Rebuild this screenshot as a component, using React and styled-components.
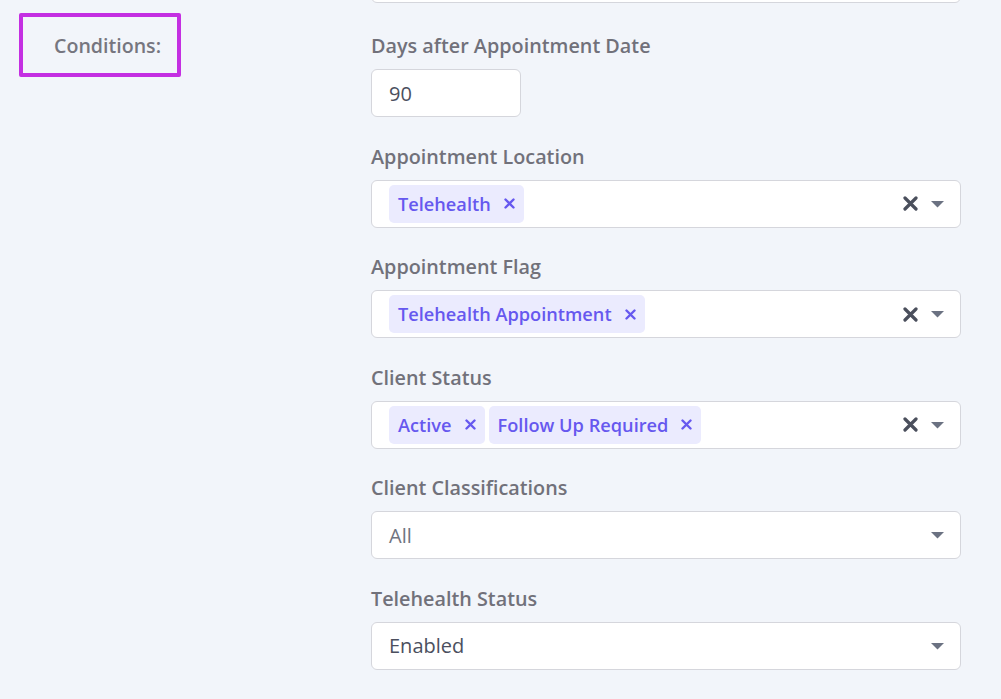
import React from "react";
import styled, { createGlobalStyle } from "styled-components";

const Global = createGlobalStyle`
  html, body {
    margin: 0;
    padding: 0;
    background: #f2f5fa;
    font-family: "Open Sans", "Noto Sans", sans-serif;
    overflow: hidden;
  }
`;

const Page = styled.div`
  display: grid;
  grid-template-columns: 371px 590px;
  height: 699px;
`;

const Side = styled.div`
  padding: 13px 0 0 19px;
`;

const SectionTag = styled.div`
  width: 162px;
  height: 64px;
  box-sizing: border-box;
  border: 4px solid #c42fe2;
  border-radius: 2px;
  display: flex;
  align-items: center;
  padding-left: 31px;
  font-size: 19.6px;
  font-weight: 600;
  color: #76767f;
`;

const Fields = styled.div`
  display: flex;
  flex-direction: column;
  margin-top: -45px;
`;

const Field = styled.div`
  display: flex;
  flex-direction: column;
  margin-top: ${(p) => (p.gap !== undefined ? p.gap : 27.5)}px;
`;

const Label = styled.div`
  font-size: 19.8px;
  font-weight: 600;
  line-height: 24px;
  color: #71717a;
  margin-bottom: 11px;
`;

const Box = styled.div`
  box-sizing: border-box;
  height: 48px;
  width: ${(p) => p.width || "590px"};
  background: #fff;
  border: 1px solid #d5d6dc;
  border-radius: 6px;
  display: flex;
  align-items: center;
  padding: 0 16px 0 17px;
  font-size: 20px;
  color: #4b4f5e;
`;

const Value = styled.span`
  flex: 1;
  color: ${(p) => (p.muted ? "#707481" : "#4b4f5e")};
`;

const Chips = styled.div`
  flex: 1;
  display: flex;
  gap: 4px;
`;

const Chip = styled.span`
  display: inline-flex;
  align-items: center;
  height: 38px;
  padding: 0 9px;
  gap: 13px;
  background: #ebebfe;
  border-radius: 5px;
  color: #6658ef;
  font-weight: 600;
  font-size: 18.2px;
`;

const ChipX = styled.svg`
  width: 11px;
  height: 11px;
`;

const Controls = styled.div`
  display: flex;
  align-items: center;
  gap: 13px;
`;

const Cross = () => (
  <svg width="15" height="15" viewBox="0 0 15 15">
    <path d="M2 2 L13 13 M13 2 L2 13" stroke="#4a4f5c" strokeWidth="3.2" strokeLinecap="round" />
  </svg>
);

const Caret = () => (
  <svg width="13" height="8" viewBox="0 0 13 8">
    <path d="M0 1 H13 L6.5 7.5 Z" fill="#6b7282" />
  </svg>
);

const Tag = ({ children }) => (
  <Chip>
    {children}
    <ChipX viewBox="0 0 11 11">
      <path d="M1.5 1.5 L9.5 9.5 M9.5 1.5 L1.5 9.5" stroke="#6658ef" strokeWidth="2.4" strokeLinecap="round" />
    </ChipX>
  </Chip>
);

const MultiSelect = ({ tags }) => (
  <Box>
    <Chips>
      {tags.map((t) => (
        <Tag key={t}>{t}</Tag>
      ))}
    </Chips>
    <Controls>
      <Cross />
      <Caret />
    </Controls>
  </Box>
);

const Select = ({ value, muted }) => (
  <Box>
    <Value muted={muted}>{value}</Value>
    <Caret />
  </Box>
);

export default function App() {
  return (
    <>
      <Global />
      <Page>
        <Side>
          <SectionTag>Conditions:</SectionTag>
        </Side>
        <Fields>
          <Field gap={0}>
            <Box />
          </Field>
          <Field gap={31}>
            <Label>Days after Appointment Date</Label>
            <Box width="150px">90</Box>
          </Field>
          <Field>
            <Label>Appointment Location</Label>
            <MultiSelect tags={["Telehealth"]} />
          </Field>
          <Field>
            <Label>Appointment Flag</Label>
            <MultiSelect tags={["Telehealth Appointment"]} />
          </Field>
          <Field>
            <Label>Client Status</Label>
            <MultiSelect tags={["Active", "Follow Up Required"]} />
          </Field>
          <Field>
            <Label>Client Classifications</Label>
            <Select value="All" muted />
          </Field>
          <Field>
            <Label>Telehealth Status</Label>
            <Select value="Enabled" />
          </Field>
        </Fields>
      </Page>
    </>
  );
}
